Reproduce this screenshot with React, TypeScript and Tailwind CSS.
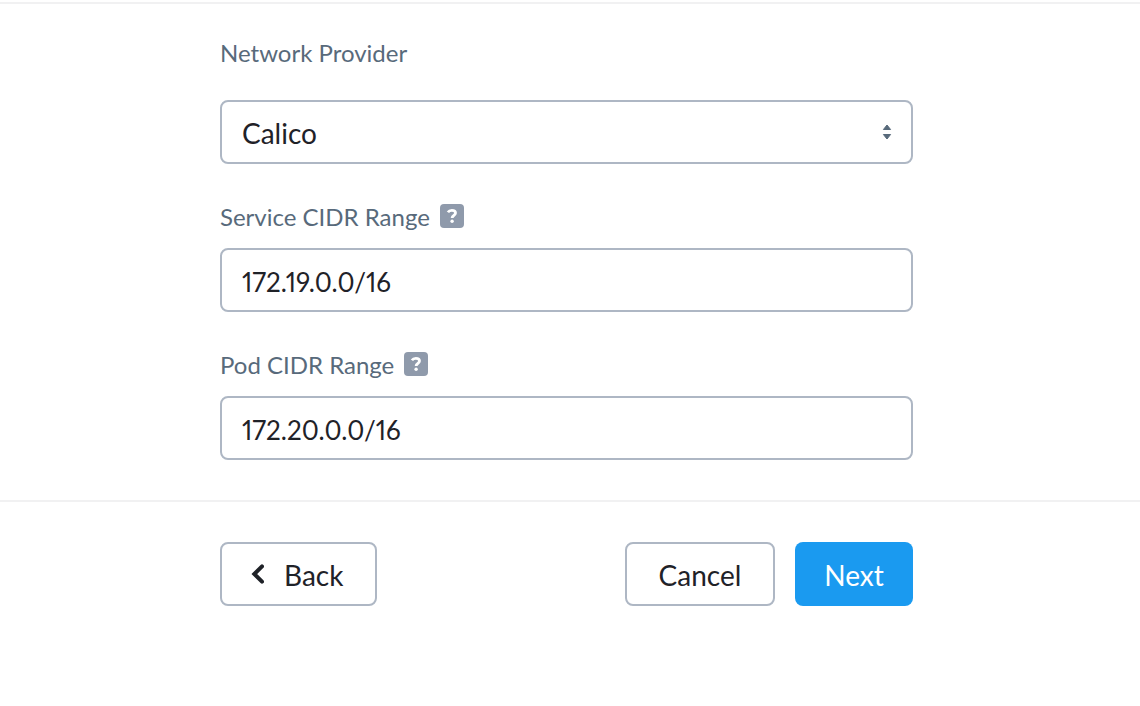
import { useState } from "react";

const controlClass =
  "block h-16 w-full appearance-none rounded-lg border-2 border-[#aeb7c4] bg-white px-5 leading-8 text-[#1f2228] outline-none focus:border-[#1a9af0]";

const labelClass = "text-2xl leading-8 text-[#586a7b]";

function HelpIcon({ label }: { label: string }) {
  return (
    <button type="button" aria-label={label} className="mb-0.5 h-6 w-6 rounded bg-[#8f9aab]">
      <svg viewBox="0 0 24 24" className="h-6 w-6" fill="none" aria-hidden="true">
        <path
          d="M7.9 8.2C8.8 6.9 10.2 6.3 11.8 6.3C13.9 6.3 15.5 7.3 15.5 9C15.5 11.2 12.1 11.4 12.1 14"
          stroke="#fff"
          strokeWidth="2.8"
        />
        <circle cx="12.1" cy="17.2" r="1.7" fill="#fff" />
      </svg>
    </button>
  );
}

function CidrField({ id, label, initial }: { id: string; label: string; initial: string }) {
  const [value, setValue] = useState(initial);
  return (
    <div className="mt-[37px]">
      <div className="flex items-center gap-2.5">
        <label htmlFor={id} className={labelClass}>
          {label}
        </label>
        <HelpIcon label={`About ${label}`} />
      </div>
      <input
        id={id}
        type="text"
        value={value}
        onChange={(e) => setValue(e.target.value)}
        className={`mt-[15px] pt-1 text-[26px] proportional-nums ${controlClass}`}
      />
    </div>
  );
}

export default function App() {
  const [provider, setProvider] = useState("calico");
  return (
    <form className="bg-white pt-0.5 font-['Lato',sans-serif]" onSubmit={(e) => e.preventDefault()}>
      <section className="border-y-2 border-[#f1f1f2] pt-[33px] pr-[227px] pb-10 pl-[220px]">
        <label htmlFor="provider" className={`block ${labelClass}`}>
          Network Provider
        </label>
        <div className="relative mt-[31px]">
          <select
            id="provider"
            value={provider}
            onChange={(e) => setProvider(e.target.value)}
            className={`pt-0.5 text-[28px] ${controlClass}`}
          >
            <option value="calico">Calico</option>
            <option value="flannel">Flannel</option>
          </select>
          <svg
            viewBox="0 0 10 16"
            className="pointer-events-none absolute top-6 right-[21px] h-4 w-2.5"
            fill="#586a7b"
            stroke="#586a7b"
            strokeLinejoin="round"
            aria-hidden="true"
          >
            <path d="M5 1L8.6 5.5H1.4Z" />
            <path d="M5 15L8.6 10.5H1.4Z" />
          </svg>
        </div>
        <CidrField id="service-cidr" label="Service CIDR Range" initial="172.19.0.0/16" />
        <CidrField id="pod-cidr" label="Pod CIDR Range" initial="172.20.0.0/16" />
      </section>

      <div className="flex gap-5 pt-10 pr-[227px] pl-[220px] text-[28px] leading-8">
        <button
          type="button"
          className="mr-auto flex h-16 w-[157px] items-center gap-5 rounded-lg border-2 border-[#aeb7c4] pt-0.5 pl-[29px] text-[#1f2228]"
        >
          <svg
            viewBox="0 0 13 20"
            className="mb-0.5 h-5 w-[13px]"
            fill="none"
            stroke="#1f2228"
            strokeWidth="4"
            strokeLinecap="round"
            aria-hidden="true"
          >
            <path d="M11 2.3L3.3 10L11 17.7" />
          </svg>
          Back
        </button>
        <button
          type="button"
          className="h-16 w-[150px] rounded-lg border-2 border-[#aeb7c4] pt-0.5 text-[#1f2228]"
        >
          Cancel
        </button>
        <button type="submit" className="h-16 w-[118px] rounded-lg bg-[#1a9af0] pt-0.5 text-white">
          Next
        </button>
      </div>
    </form>
  );
}
